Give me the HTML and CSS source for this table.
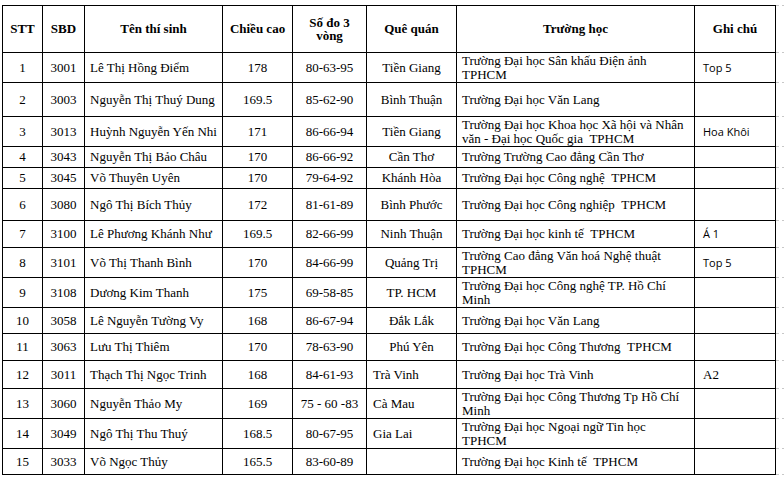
FILE: index.html
```html
<!DOCTYPE html>
<html lang="vi">
<head>
<meta charset="utf-8">
<title>Danh sách thí sinh</title>
<link rel="stylesheet" href="styles.css">
</head>
<body>
<div class="page">
<table class="tbl">
  <colgroup>
    <col class="c-stt"><col class="c-sbd"><col class="c-name"><col class="c-h"><col class="c-m"><col class="c-q"><col class="c-s"><col class="c-n"><col class="c-g">
  </colgroup>
  <tr class="hd h47">
    <th>STT</th><th>SBD</th><th>Tên thí sinh</th><th>Chiều cao</th><th>Số đo 3<br>vòng</th><th>Quê quán</th><th>Trường học</th><th>Ghi chú</th><td class="g"></td>
  </tr>
  <tr class="h30"><td class="ctr">1</td><td class="ctr">3001</td><td class="lft">Lê Thị Hồng Điểm</td><td class="ctr">178</td><td class="ctr">80-63-95</td><td class="ctr">Tiền Giang</td><td class="lft sch">Trường Đại học Sân khấu Điện ảnh<br>TPHCM</td><td class="note">Top 5</td><td class="g"></td></tr>
  <tr class="h34"><td class="ctr">2</td><td class="ctr">3003</td><td class="lft">Nguyễn Thị Thuý Dung</td><td class="ctr">169.5</td><td class="ctr">85-62-90</td><td class="ctr">Bình Thuận</td><td class="lft sch">Trường Đại học Văn Lang</td><td class="note"></td><td class="g"></td></tr>
  <tr class="h30"><td class="ctr">3</td><td class="ctr">3013</td><td class="lft">Huỳnh Nguyễn Yến Nhi</td><td class="ctr">171</td><td class="ctr">86-66-94</td><td class="ctr">Tiền Giang</td><td class="lft sch">Trường Đại học Khoa học Xã hội và Nhân<br>văn - Đại học Quốc gia &nbsp;TPHCM</td><td class="note">Hoa Khôi</td><td class="g"></td></tr>
  <tr class="h21"><td class="ctr">4</td><td class="ctr">3043</td><td class="lft">Nguyễn Thị Bảo Châu</td><td class="ctr">170</td><td class="ctr">86-66-92</td><td class="ctr">Cần Thơ</td><td class="lft sch">Trường Trường Cao đẳng Cần Thơ</td><td class="note"></td><td class="g"></td></tr>
  <tr class="h21"><td class="ctr">5</td><td class="ctr">3045</td><td class="lft">Võ Thuyên Uyên</td><td class="ctr">170</td><td class="ctr">79-64-92</td><td class="ctr">Khánh Hòa</td><td class="lft sch">Trường Đại học Công nghệ &nbsp;TPHCM</td><td class="note"></td><td class="g"></td></tr>
  <tr class="h32"><td class="ctr">6</td><td class="ctr">3080</td><td class="lft">Ngô Thị Bích Thủy</td><td class="ctr">172</td><td class="ctr">81-61-89</td><td class="ctr">Bình Phước</td><td class="lft sch">Trường Đại học Công nghiệp &nbsp;TPHCM</td><td class="note"></td><td class="g"></td></tr>
  <tr class="h27"><td class="ctr">7</td><td class="ctr">3100</td><td class="lft">Lê Phương Khánh Như</td><td class="ctr">169.5</td><td class="ctr">82-66-99</td><td class="ctr">Ninh Thuận</td><td class="lft sch">Trường Đại học kinh tế &nbsp;TPHCM</td><td class="note">Á 1</td><td class="g"></td></tr>
  <tr class="h30"><td class="ctr">8</td><td class="ctr">3101</td><td class="lft">Võ Thị Thanh Bình</td><td class="ctr">170</td><td class="ctr">84-66-99</td><td class="ctr">Quảng Trị</td><td class="lft sch">Trường Cao đẳng Văn hoá Nghệ thuật<br>TPHCM</td><td class="note">Top 5</td><td class="g"></td></tr>
  <tr class="h30"><td class="ctr">9</td><td class="ctr">3108</td><td class="lft">Dương Kim Thanh</td><td class="ctr">175</td><td class="ctr">69-58-85</td><td class="ctr">TP. HCM</td><td class="lft sch">Trường Đại học Công nghệ TP. Hồ Chí<br>Minh</td><td class="note"></td><td class="g"></td></tr>
  <tr class="h26"><td class="ctr">10</td><td class="ctr">3058</td><td class="lft">Lê Nguyễn Tường Vy</td><td class="ctr">168</td><td class="ctr">86-67-94</td><td class="ctr">Đắk Lắk</td><td class="lft sch">Trường Đại học Văn Lang</td><td class="note"></td><td class="g"></td></tr>
  <tr class="h27"><td class="ctr">11</td><td class="ctr">3063</td><td class="lft">Lưu Thị Thiêm</td><td class="ctr">170</td><td class="ctr">78-63-90</td><td class="ctr">Phú Yên</td><td class="lft sch">Trường Đại học Công Thương &nbsp;TPHCM</td><td class="note"></td><td class="g"></td></tr>
  <tr class="h28"><td class="ctr">12</td><td class="ctr">3011</td><td class="lft">Thạch Thị Ngọc Trinh</td><td class="ctr">168</td><td class="ctr">84-61-93</td><td class="lq">Trà Vinh</td><td class="lft sch">Trường Đại học Trà Vinh</td><td class="note serif">A2</td><td class="g"></td></tr>
  <tr class="h30"><td class="ctr">13</td><td class="ctr">3060</td><td class="lft">Nguyễn Thảo My</td><td class="ctr">169</td><td class="ctr">75 - 60 -83</td><td class="lq">Cà Mau</td><td class="lft sch">Trường Đại học Công Thương Tp Hồ Chí<br>Minh</td><td class="note"></td><td class="g"></td></tr>
  <tr class="h30"><td class="ctr">14</td><td class="ctr">3049</td><td class="lft">Ngô Thị Thu Thuý</td><td class="ctr">168.5</td><td class="ctr">80-67-95</td><td class="lq">Gia Lai</td><td class="lft sch">Trường Đại học Ngoại ngữ Tin học<br>TPHCM</td><td class="note"></td><td class="g"></td></tr>
  <tr class="h26"><td class="ctr">15</td><td class="ctr">3033</td><td class="lft">Võ Ngọc Thủy</td><td class="ctr">165.5</td><td class="ctr">83-60-89</td><td class="ctr"></td><td class="lft sch">Trường Đại học Kinh tế &nbsp;TPHCM</td><td class="note"></td><td class="g"></td></tr>
</table>
</div>
</body>
</html>
```

FILE: styles.css
```css
html, body {
  margin: 0;
  padding: 0;
  background: #ffffff;
}
.page {
  padding: 5px 0 0 2px;
  width: 782px;
}
.tbl {
  border-collapse: collapse;
  table-layout: fixed;
  width: 782px;
  font-family: "Liberation Serif", "Times New Roman", serif;
  font-size: 13px;
  color: #000;
}
.c-stt { width: 40px; }
.c-sbd { width: 42px; }
.c-name { width: 138px; }
.c-h { width: 70px; }
.c-m { width: 74px; }
.c-q { width: 90px; }
.c-s { width: 238px; }
.c-n { width: 81px; }
.c-g { width: 9px; }
.tbl th, .tbl td {
  border: 1px solid #000;
  padding: 0;
  vertical-align: middle;
  line-height: 13.5px;
  white-space: nowrap;
  overflow: hidden;
}
.tbl th {
  font-weight: bold;
  text-align: center;
}
.tbl td.g {
  border: none;
  border-bottom: 1px dashed #c8c8c8;
}
.hd td.g {
  border-top: 1px dashed #c8c8c8;
}
.ctr { text-align: center; }
.lft { text-align: left; padding-left: 5px !important; }
.sch { padding-left: 5px !important; }
.lq { text-align: left; padding-left: 6px !important; }
.note {
  text-align: left;
  padding-left: 8px !important;
  font-family: "Open Sans", "Noto Sans", sans-serif;
  font-size: 11px;
}
.note.serif {
  font-family: "Liberation Serif", serif;
  font-size: 13px;
}
.h47 { height: 47px; }
.h34 { height: 34px; }
.h32 { height: 32px; }
.h30 { height: 30px; }
.h28 { height: 28px; }
.h27 { height: 27px; }
.h26 { height: 26px; }
.h21 { height: 21px; }
```
